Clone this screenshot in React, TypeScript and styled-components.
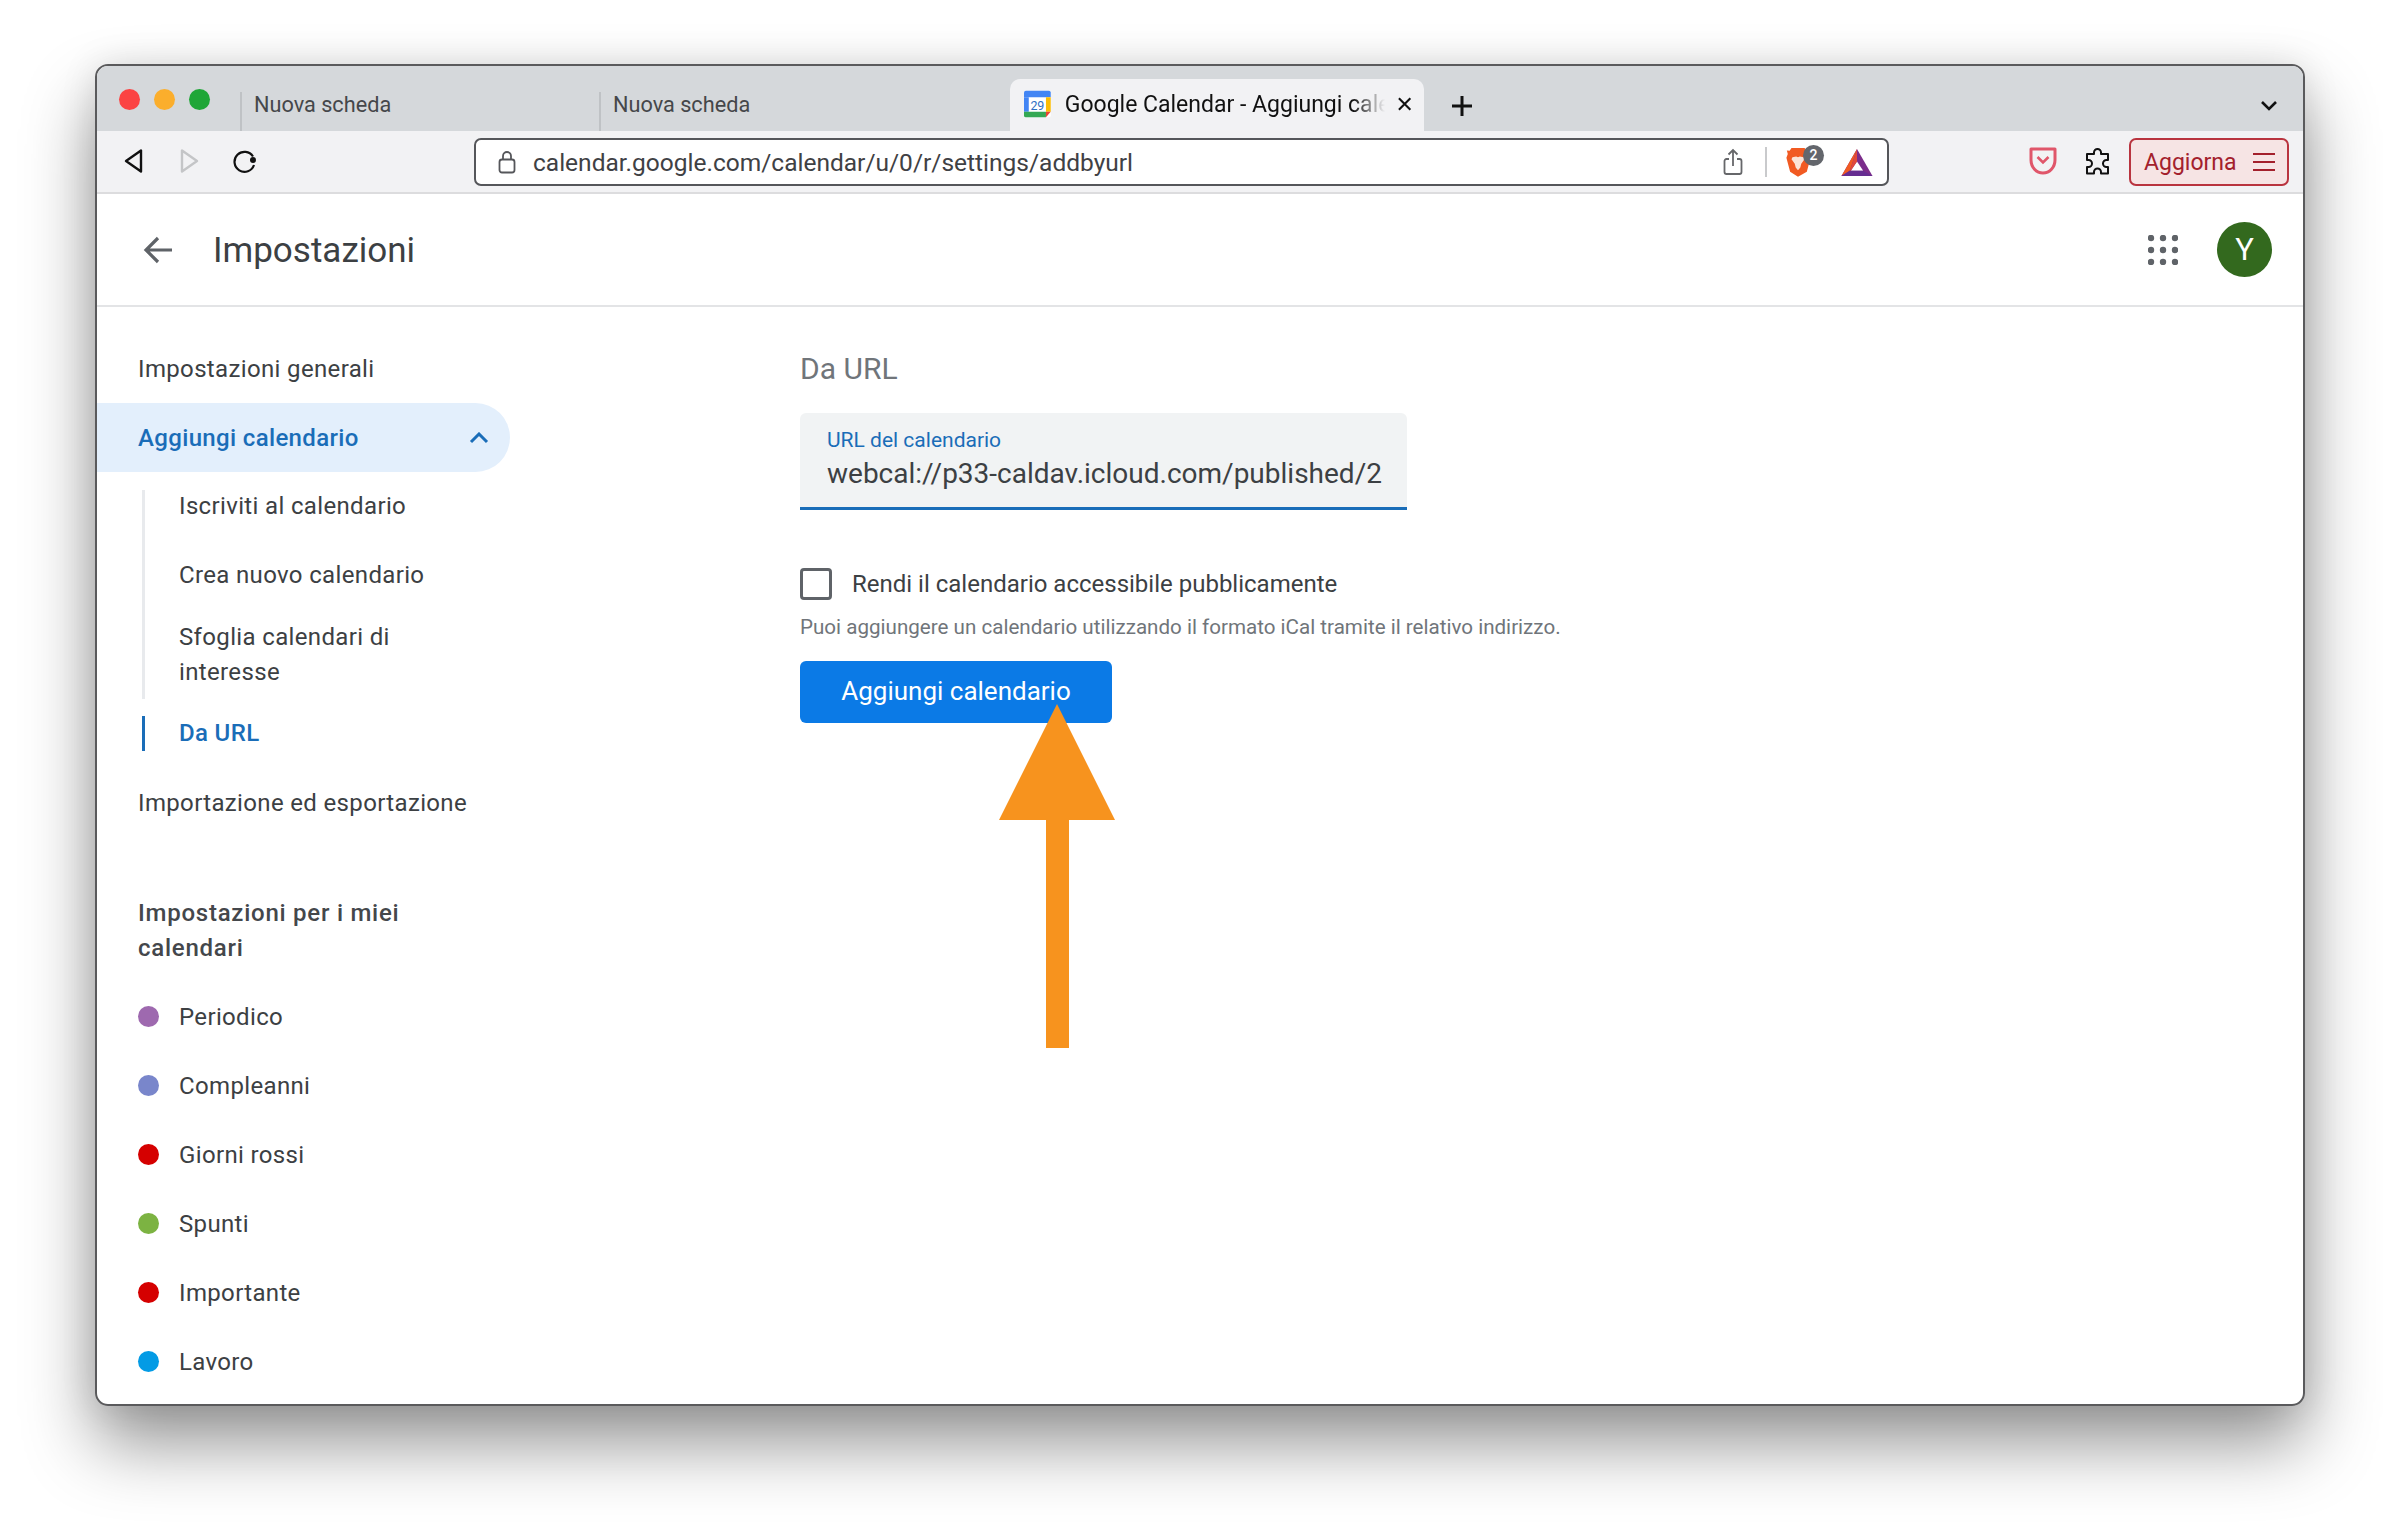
import React from 'react';
import styled, { createGlobalStyle } from 'styled-components';

const GlobalStyle = createGlobalStyle`
	html, body {
		margin: 0;
		background: #ffffff;
		font-family: Roboto, "Liberation Sans", sans-serif;
	}
	* { box-sizing: border-box; }
`;

const Stage = styled.div`
	width: 2400px;
	height: 1532px;
	padding: 64px 95px 126px;
	overflow: hidden;
`;

const Window = styled.div`
	position: relative;
	height: 1342px;
	border: 2px solid #5a5a5c;
	border-radius: 13px;
	background: #fff;
	overflow: hidden;
	display: flex;
	flex-direction: column;
`;

const Shadow = styled.div`
	border-radius: 13px;
	box-shadow: 0 38px 70px rgba(0, 0, 0, 0.42), 0 0 36px rgba(0, 0, 0, 0.1);
`;

const TabStrip = styled.div`
	height: 65px;
	flex: none;
	background: #d5d8db;
	display: flex;
	align-items: flex-end;
	padding-left: 22px;
`;

const Lights = styled.div`
	display: flex;
	gap: 14px;
	align-self: flex-start;
	margin-top: 23px;
	width: 121px;
`;

const Light = styled.span<{ $color: string }>`
	width: 21px;
	height: 21px;
	border-radius: 50%;
	background: ${(p) => p.$color};
`;

const Tab = styled.div<{ $width: number }>`
	width: ${(p) => p.$width}px;
	height: 39px;
	border-left: 2px solid #bfc2c5;
	padding-left: 12px;
	font-size: 21.7px;
	line-height: 26px;
	color: #45474a;
`;

const ActiveTab = styled.div`
	width: 414px;
	height: 52px;
	background: #f2f2f4;
	border-radius: 10px 10px 0 0;
	display: flex;
	align-items: center;
	padding: 0 12px 2px 14px;
	font-size: 23px;
	color: #111;
`;

const TabTitle = styled.span`
	width: 320px;
	margin-left: 14px;
	white-space: nowrap;
	-webkit-mask-image: linear-gradient(to right, #000 90%, transparent 100%);
	mask-image: linear-gradient(to right, #000 90%, transparent 100%);
`;

const StripIcon = styled.span<{ $left: number }>`
	display: flex;
	margin-left: ${(p) => p.$left}px;
	align-self: center;
	margin-top: 14px;
`;

const Toolbar = styled.div`
	height: 63px;
	flex: none;
	background: #f2f2f4;
	border-bottom: 2px solid #dcdcde;
	display: flex;
	align-items: flex-start;
	padding: 7px 0 0 26px;
`;

const NavIcon = styled.span<{ $width: number; $left?: number }>`
	width: ${(p) => p.$width}px;
	height: 46px;
	margin-left: ${(p) => p.$left ?? 0}px;
	display: flex;
	align-items: center;

	svg {
		flex: none;
	}
`;

const AddressBar = styled.div`
	width: 1415px;
	height: 48px;
	margin-left: 14px;
	background: #fff;
	border: 2px solid #55565a;
	border-radius: 7px;
	display: flex;
	align-items: center;
	padding-left: 22px;
	font-size: 24.5px;
	color: #3f4144;
`;

const Url = styled.span`
	margin-left: 17px;
	width: 1190px;
	white-space: nowrap;
`;

const BarDivider = styled.span`
	width: 2px;
	height: 30px;
	background: #c9cacc;
	margin: 0 18px 0 22px;
`;

const Brave = styled.span`
	position: relative;
	display: flex;
	width: 44px;
`;

const BraveBadge = styled.span`
	position: absolute;
	left: 18px;
	top: -2px;
	width: 21px;
	height: 21px;
	border-radius: 50%;
	background: #63666c;
	color: #fff;
	font-size: 14px;
	font-weight: 500;
	line-height: 21px;
	text-align: center;
`;

const BatLogo = styled.svg`
	margin-left: 12px;
`;

const UpdateButton = styled.div`
	width: 160px;
	height: 48px;
	margin-left: 44px;
	border: 2px solid #b9343f;
	border-radius: 7px;
	background: #f6e4e4;
	color: #a3202c;
	display: flex;
	align-items: center;
	justify-content: space-between;
	padding: 0 11px 0 13px;
	font-size: 23px;
`;

const Header = styled.header`
	height: 113px;
	flex: none;
	border-bottom: 2px solid #e3e4e6;
	display: flex;
	align-items: center;
	padding-left: 45px;
`;

const PageTitle = styled.h1`
	margin: 2px 0 0 39px;
	flex: 1;
	font-size: 35px;
	font-weight: 400;
	color: #3c4043;
`;

const Avatar = styled.div`
	width: 55px;
	height: 55px;
	margin: 0 31px 0 39px;
	border-radius: 50%;
	background: #33691e;
	color: #fff;
	font-size: 31px;
	line-height: 55px;
	text-align: center;
`;

const Body = styled.div`
	flex: 1;
	display: grid;
	grid-template-columns: 703px 1fr;
	padding-top: 27px;
`;

const Sidebar = styled.nav`
	display: flex;
	flex-direction: column;
`;

const NavRow = styled.div`
	height: 69px;
	padding-left: 41px;
	display: flex;
	align-items: center;
	font-size: 24px;
	letter-spacing: 0.35px;
	color: #3c4043;
`;

const OpenRow = styled(NavRow)`
	width: 413px;
	padding-right: 21px;
	justify-content: space-between;
	border-radius: 0 35px 35px 0;
	background: #e3effc;
	color: #1a6db8;
	font-weight: 500;
`;

const SubRow = styled.div<{ $active?: boolean; $height?: number }>`
	position: relative;
	width: 400px;
	height: ${(p) => p.$height ?? 69}px;
	padding-left: 82px;
	display: flex;
	align-items: center;
	font-size: 24px;
	line-height: 35px;
	letter-spacing: 0.35px;
	color: ${(p) => (p.$active ? '#1a6db8' : '#3c4043')};
	font-weight: ${(p) => (p.$active ? 500 : 400)};

	&::before {
		content: '';
		position: absolute;
		left: 45px;
		top: ${(p) => (p.$active ? '17px' : '0')};
		bottom: ${(p) => (p.$active ? '17px' : '0')};
		width: 3px;
		background: ${(p) => (p.$active ? '#1a6db8' : '#e8eaed')};
	}

	&:first-child::before {
		top: 18px;
	}
`;

const SectionTitle = styled.h2`
	margin: 59px 0 16px;
	padding-left: 41px;
	width: 330px;
	font-size: 24px;
	font-weight: 500;
	line-height: 35px;
	letter-spacing: 0.75px;
	color: #44474b;
`;

const Dot = styled.span<{ $color: string }>`
	width: 21px;
	height: 21px;
	margin-right: 20px;
	border-radius: 50%;
	background: ${(p) => p.$color};
`;

const Main = styled.main`
	display: flex;
	flex-direction: column;
	align-items: flex-start;
`;

const SectionHeading = styled.h3`
	margin: 0 0 10px;
	height: 69px;
	line-height: 69px;
	font-size: 30px;
	font-weight: 400;
	color: #70757a;
`;

const Field = styled.div`
	width: 607px;
	height: 97px;
	padding: 14px 20px 0 27px;
	background: #f1f3f4;
	border-bottom: 3px solid #1a6db8;
	border-radius: 6px 6px 0 0;
`;

const FieldLabel = styled.div`
	font-size: 21px;
	line-height: 26px;
	color: #1a6db8;
`;

const FieldValue = styled.div`
	margin-top: 5px;
	font-size: 28px;
	line-height: 32px;
	color: #3c4043;
	white-space: nowrap;
`;

const CheckRow = styled.label`
	display: flex;
	align-items: center;
	gap: 20px;
	margin-top: 58px;
	font-size: 24px;
	line-height: 32px;
	color: #3c4043;
`;

const CheckBox = styled.span`
	width: 32px;
	height: 32px;
	border: 3px solid #5f6368;
	border-radius: 4px;
`;

const Helper = styled.p`
	margin: 13px 0 20px;
	font-size: 20.6px;
	line-height: 28px;
	color: #70757a;
`;

const AddButton = styled.div`
	width: 312px;
	height: 62px;
	border-radius: 6px;
	background: #0b7ae6;
	color: #fff;
	font-size: 26px;
	line-height: 60px;
	text-align: center;
`;

const ArrowMark = styled.svg`
	position: absolute;
	left: 902px;
	top: 638px;
`;

const calendars = [
	{ name: 'Periodico', color: '#9e69af' },
	{ name: 'Compleanni', color: '#7986cb' },
	{ name: 'Giorni rossi', color: '#d50000' },
	{ name: 'Spunti', color: '#7cb342' },
	{ name: 'Importante', color: '#d50000' },
	{ name: 'Lavoro', color: '#039be5' },
];

const CalendarFavicon = () => (
	<svg width="28" height="28" viewBox="0 0 28 28">
		<rect x="0" y="0" width="28" height="28" rx="2" fill="#fff" />
		<path d="M0 2a2 2 0 0 1 2-2h24a2 2 0 0 1 2 2v5H0z" fill="#4285f4" />
		<path d="M0 7h5v15H0z" fill="#4285f4" />
		<path d="M23 7h5v15h-5z" fill="#fbbc04" />
		<path d="M0 22h23v6H2a2 2 0 0 1-2-2z" fill="#34a853" />
		<path d="M23 22h5l-5 6z" fill="#ea4335" />
		<text x="14" y="20" textAnchor="middle" fontSize="13" fontFamily="Roboto" fill="#2f6fc4">
			29
		</text>
	</svg>
);

export default function App() {
	return (
		<>
			<GlobalStyle />
			<Stage>
				<Shadow>
					<Window>
						<TabStrip>
							<Lights>
								<Light $color="#fb4343" />
								<Light $color="#fbae2c" />
								<Light $color="#1fa637" />
							</Lights>
							<Tab $width={359}>Nuova scheda</Tab>
							<Tab $width={411}>Nuova scheda</Tab>
							<ActiveTab>
								<CalendarFavicon />
								<TabTitle>Google Calendar - Aggiungi cale</TabTitle>
								<svg width="16" height="16" viewBox="0 0 16 16" style={{ marginLeft: 12 }}>
									<path d="M2 2l12 12M14 2L2 14" stroke="#111" strokeWidth="2.2" />
								</svg>
							</ActiveTab>
							<StripIcon $left={27}>
								<svg width="22" height="22" viewBox="0 0 22 22">
									<path d="M11 1v20M1 11h20" stroke="#111" strokeWidth="3" />
								</svg>
							</StripIcon>
							<StripIcon $left={787}>
								<svg width="18" height="12" viewBox="0 0 18 12">
									<path d="M2 2l7 7 7-7" fill="none" stroke="#111" strokeWidth="2.6" />
								</svg>
							</StripIcon>
						</TabStrip>

						<Toolbar>
							<NavIcon $width={55}>
								<svg width="22" height="26" viewBox="0 0 22 26">
									<path d="M18 2.5v21L3 13z" fill="none" stroke="#111" strokeWidth="2.4" strokeLinejoin="round" />
								</svg>
							</NavIcon>
							<NavIcon $width={55}>
								<svg width="22" height="26" viewBox="0 0 22 26">
									<path d="M4 2.5v21L19 13z" fill="none" stroke="#c4c5c7" strokeWidth="2.4" strokeLinejoin="round" />
								</svg>
							</NavIcon>
							<NavIcon $width={227}>
								<svg width="24" height="24" viewBox="0 0 24 24">
									<path d="M20 7.5A10 10 0 1 0 21 16" fill="none" stroke="#111" strokeWidth="2.2" />
									<circle cx="20" cy="11" r="3" fill="#111" />
								</svg>
							</NavIcon>
							<AddressBar>
								<svg width="18" height="24" viewBox="0 0 18 24">
									<rect x="1.5" y="9.5" width="15" height="13" rx="2.5" fill="none" stroke="#55565a" strokeWidth="1.8" />
									<path d="M5 9.5V6a4 4 0 0 1 8 0v3.500" fill="none" stroke="#55565a" strokeWidth="1.8" />
								</svg>
								<Url>calendar.google.com/calendar/u/0/r/settings/addbyurl</Url>
								<svg width="20" height="28" viewBox="0 0 20 28">
									<path d="M6 11H3.500a2 2 0 0 0-2 2v11a2 2 0 0 0 2 2h13a2 2 0 0 0 2-2V13a2 2 0 0 0-2-2H14" fill="none" stroke="#66676a" strokeWidth="1.800" />
									<path d="M10 18V2M5.500 6.500L10 2l4.500 4.500" fill="none" stroke="#66676a" strokeWidth="1.800" />
								</svg>
								<BarDivider />
								<Brave>
									<svg width="26" height="30" viewBox="0 0 28 32">
										<path d="M7 1h14l3 3 3-.5-1 4 1.500 4-4 15L14 32 5.500 26.500l-4-15L3 7.500l-1-4L5 4z" fill="#f15a22" />
										<path d="M8 11l4-1 2 1 2-1 4 1 1 2-3.500 5-1 4-2.500 3-2.500-3-1-4L7 13z" fill="#fbe3d6" />
									</svg>
									<BraveBadge>2</BraveBadge>
								</Brave>
								<BatLogo width="32" height="29" viewBox="0 0 30 28">
									<path d="M15 1L0 27h30z" fill="#7b2d8b" />
									<path d="M15 1L0 27l8-5z" fill="#f15a22" />
									<path d="M15 13l-6 9h12z" fill="#fff" />
									<path d="M15 1l-7 21h1l6-9z" fill="#e1493a" />
									<path d="M0 27h30l-9-5H8z" fill="#662d91" />
								</BatLogo>
							</AddressBar>
							<NavIcon $width={0} $left={140}>
								<svg width="28" height="30" viewBox="0 0 28 30">
									<path d="M2 3h24v11a12 13 0 0 1-24 0z" fill="none" stroke="#e0566a" strokeWidth="3" strokeLinejoin="round" />
									<path d="M8.500 11l5.500 5.500 5.500-5.500" fill="none" stroke="#e0566a" strokeWidth="2.600" />
								</svg>
							</NavIcon>
							<NavIcon $width={0} $left={56}>
								<svg width="26" height="28" viewBox="0 0 26 28">
									<path d="M9 5.500a3.500 3.500 0 0 1 7 0V7h7v6h-1.500a3.500 3.500 0 0 0 0 7H23v6.500h-7V25a3.500 3.500 0 0 0-7 0v1.500H2V20h1.500a3.500 3.500 0 0 0 0-7H2V7h7z" fill="none" stroke="#111" strokeWidth="2" strokeLinejoin="round" />
								</svg>
							</NavIcon>
							<UpdateButton>
								Aggiorna
								<svg width="24" height="20" viewBox="0 0 24 20">
									<path d="M1 2h22M1 10h22M1 18h22" stroke="#a3202c" strokeWidth="2.200" />
								</svg>
							</UpdateButton>
						</Toolbar>

						<Header>
							<svg width="32" height="32" viewBox="0 0 32 32">
								<path d="M30 16H4M16 4L4 16l12 12" fill="none" stroke="#5f6368" strokeWidth="3.200" />
							</svg>
							<PageTitle>Impostazioni</PageTitle>
							<svg width="30" height="30" viewBox="0 0 30 30">
								{[3, 15, 27].map((cy) =>
									[3, 15, 27].map((cx) => <circle key={`${cx}-${cy}`} cx={cx} cy={cy} r="3.200" fill="#5f6368" />),
								)}
							</svg>
							<Avatar>Y</Avatar>
						</Header>

						<Body>
							<Sidebar>
								<NavRow>Impostazioni generali</NavRow>
								<OpenRow>
									Aggiungi calendario
									<svg width="20" height="12" viewBox="0 0 20 12">
										<path d="M2 10l8-8 8 8" fill="none" stroke="#1a6db8" strokeWidth="3" />
									</svg>
								</OpenRow>
								<div>
									<SubRow>Iscriviti al calendario</SubRow>
									<SubRow>Crea nuovo calendario</SubRow>
									<SubRow $height={89}>
										Sfoglia calendari di
										<br />
										interesse
									</SubRow>
									<SubRow $active>Da URL</SubRow>
								</div>
								<NavRow>Importazione ed esportazione</NavRow>
								<SectionTitle>Impostazioni per i miei calendari</SectionTitle>
								{calendars.map((c) => (
									<NavRow key={c.name}>
										<Dot $color={c.color} />
										{c.name}
									</NavRow>
								))}
							</Sidebar>

							<Main>
								<SectionHeading>Da URL</SectionHeading>
								<Field>
									<FieldLabel>URL del calendario</FieldLabel>
									<FieldValue>webcal://p33-caldav.icloud.com/published/2</FieldValue>
								</Field>
								<CheckRow>
									<CheckBox />
									Rendi il calendario accessibile pubblicamente
								</CheckRow>
								<Helper>Puoi aggiungere un calendario utilizzando il formato iCal tramite il relativo indirizzo.</Helper>
								<AddButton>Aggiungi calendario</AddButton>
							</Main>
						</Body>

						<ArrowMark width="116" height="346" viewBox="0 0 116 346">
							<path d="M58 0l58 116H70v228H47V116H0z" fill="#f7931e" />
						</ArrowMark>
					</Window>
				</Shadow>
			</Stage>
		</>
	);
}
